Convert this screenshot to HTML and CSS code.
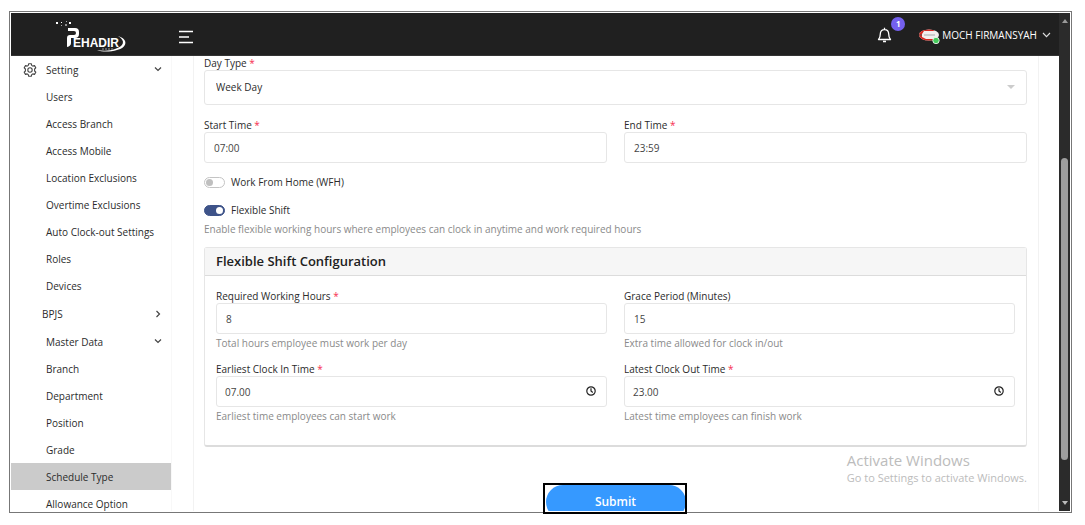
FILE: index.html
```html
<!DOCTYPE html>
<html lang="en">
<head>
<meta charset="utf-8">
<title>Pehadir - Schedule Type</title>
<link rel="stylesheet" href="styles.css">
</head>
<body>
<div class="frame">
  <div class="app">
    <div class="page">
      <header class="topbar">
        <a class="brand" href="#" aria-label="Pehadir">
          <svg width="74" height="38" viewBox="0 0 74 38">
            <g fill="#fff">
              <rect x="1" y="7" width="2" height="2"/><rect x="6" y="7" width="1" height="1"/><rect x="11" y="6" width="1" height="1" opacity=".6"/><rect x="14" y="7" width="2" height="2"/><rect x="10" y="9" width="2" height="2" opacity=".5"/><rect x="6" y="10" width="1" height="1" opacity=".6"/>
              <path d="M13 13h7q4 0 4 4v2q0 4-4 4h-4v5q0 3-4 4v-9q0-3 3-3h4q2 0 2-2t-2-2h-6z"/>
            </g>
            <text class="logo-text" x="18" y="32">EHADIR</text>
            <path d="M63 21c11 3 9 12-1 14c-7 2-15 2-20 0c6 1 13 1 18-1c9-3 11-8 3-13z" fill="#fff"/>
            <path d="M47 34h11" stroke="#999" stroke-width="1" stroke-dasharray="2 1"/>
          </svg>
        </a>
        <button class="icon-btn menu-btn" aria-label="Toggle menu">
          <svg width="16" height="14" viewBox="0 0 16 14" stroke="#fff" stroke-width="1.5"><path d="M1 1.500h14M1 7h10M1 12.500h14"/></svg>
        </button>
        <div class="topbar-right">
          <button class="icon-btn bell" aria-label="Notifications">
            <svg width="15" height="16" viewBox="0 0 15 16" fill="none" stroke="#fff" stroke-width="1.3" stroke-linejoin="round"><path d="M1.500 12.500c1.600-1.600 1.800-2.800 1.800-5.400C3.300 4.300 5 2.600 7.500 2.600s4.200 1.700 4.200 4.500c0 2.600.2 3.800 1.800 5.400zM7.500 2.500V.8M6 14.500h3"/></svg>
            <span class="badge">1</span>
          </button>
          <button class="user">
            <svg width="22" height="18" viewBox="0 0 22 18"><defs><clipPath id="av"><ellipse cx="11" cy="9" rx="10" ry="5.500"/></clipPath></defs><g clip-path="url(#av)"><rect width="22" height="16" fill="#f3eeee"/><path d="M0 0h16v5H6l-2 3v3l4 2h8v4H0z" fill="#d8261f"/><path d="M6 9h11" stroke="#aaa"/><path d="M1 9h3" stroke="#555"/></g><circle cx="18" cy="14.500" r="3.200" fill="#46cb5c" stroke="#fff" stroke-width=".8"/></svg>
            <span>MOCH FIRMANSYAH</span>
            <svg width="9" height="6" viewBox="0 0 9 6" fill="none" stroke="#ddd" stroke-width="1.100"><path d="M1 1l3.500 3.700L8 1"/></svg>
          </button>
        </div>
      </header>
      <div class="body">
        <nav class="sidebar">
          <a class="item setting" href="#">
            <svg class="gear" width="14" height="14" viewBox="0 0 14 14" fill="none" stroke="#444" stroke-width="1.100" stroke-linejoin="round"><path d="M5.700.7h2.600l.4 1.700 1.100.7 1.700-.5 1.300 2.200-1.200 1.200v2l1.200 1.200-1.300 2.200-1.700-.5-1.100.7-.4 1.700H5.700l-.4-1.700-1.100-.7-1.700.5L1.200 9.200 2.400 8V6L1.200 4.800l1.300-2.200 1.700.5 1.100-.7z"/><circle cx="7" cy="7" r="2.200"/></svg>
            <span>Setting</span>
            <svg class="chev" width="8" height="8" viewBox="0 0 8 8"><path d="M1 1.500l3 3 3-3"/></svg>
          </a>
          <a class="item" href="#">Users</a>
          <a class="item" href="#">Access Branch</a>
          <a class="item" href="#">Access Mobile</a>
          <a class="item" href="#">Location Exclusions</a>
          <a class="item" href="#">Overtime Exclusions</a>
          <a class="item" href="#">Auto Clock-out Settings</a>
          <a class="item" href="#">Roles</a>
          <a class="item" href="#">Devices</a>
          <a class="item group" href="#"><span>BPJS</span><svg class="chev" width="8" height="8" viewBox="0 0 8 8"><path d="M2.500 1l3 3-3 3"/></svg></a>
          <a class="item" href="#"><span>Master Data</span><svg class="chev" width="8" height="8" viewBox="0 0 8 8"><path d="M1 1.500l3 3 3-3"/></svg></a>
          <a class="item" href="#">Branch</a>
          <a class="item" href="#">Department</a>
          <a class="item" href="#">Position</a>
          <a class="item" href="#">Grade</a>
          <a class="item active" href="#">Schedule Type</a>
          <a class="item" href="#">Allowance Option</a>
        </nav>
        <main class="main">
          <form class="panel">
            <div class="field">
              <label for="day">Day Type <i>*</i></label>
              <div class="control">
                <select id="day"><option>Week Day</option></select>
                <svg class="caret" width="8" height="4" viewBox="0 0 8 4"><path d="M0 0h8L4 4z" fill="#ccc"/></svg>
              </div>
            </div>
            <div class="row times">
              <div class="field"><label for="start">Start Time <i>*</i></label><input id="start" type="text" value="07:00"></div>
              <div class="field"><label for="end">End Time <i>*</i></label><input id="end" type="text" value="23:59"></div>
            </div>
            <div class="switch"><input type="checkbox" id="wfh"><label for="wfh">Work From Home (WFH)</label></div>
            <div class="switch"><input type="checkbox" id="flex" checked><label for="flex">Flexible Shift</label></div>
            <p class="hint">Enable flexible working hours where employees can clock in anytime and work required hours</p>
            <section class="config">
              <h2>Flexible Shift Configuration</h2>
              <div class="config-body">
                <div class="field"><label for="hours">Required Working Hours <i>*</i></label><input id="hours" type="text" value="8"><p class="hint">Total hours employee must work per day</p></div>
                <div class="field"><label for="grace">Grace Period (Minutes)</label><input id="grace" type="text" value="15"><p class="hint">Extra time allowed for clock in/out</p></div>
                <div class="field"><label for="in">Earliest Clock In Time <i>*</i></label>
                  <div class="control"><input class="time" id="in" type="text" value="07.00"><svg class="clock" width="10" height="10" viewBox="0 0 10 10"><circle cx="5" cy="5" r="4.200"/><path d="M5 2.300V5l1.800 1.500"/></svg></div>
                  <p class="hint">Earliest time employees can start work</p></div>
                <div class="field"><label for="out">Latest Clock Out Time <i>*</i></label>
                  <div class="control"><input class="time" id="out" type="text" value="23.00"><svg class="clock" width="10" height="10" viewBox="0 0 10 10"><circle cx="5" cy="5" r="4.200"/><path d="M5 2.300V5l1.800 1.500"/></svg></div>
                  <p class="hint">Latest time employees can finish work</p></div>
              </div>
            </section>
            <button class="submit" type="submit">Submit</button>
          </form>
        </main>
      </div>
    </div>
    <div class="scrollbar">
      <svg width="6" height="4" viewBox="0 0 6 4"><path d="M0 4l3-4 3 4z" fill="#999"/></svg>
      <div class="track"><div class="thumb"></div></div>
      <svg width="6" height="4" viewBox="0 0 6 4"><path d="M0 0l3 4 3-4z" fill="#bbb"/></svg>
    </div>
  </div>
  <div class="watermark"><strong>Activate Windows</strong><span>Go to Settings to activate Windows.</span></div>
  <div class="highlight"></div>
</div>
</body>
</html>
```

FILE: styles.css
```css
* { box-sizing: border-box; }
body {
  margin: 0;
  padding: 11px 13px 12px 9px;
  height: 100vh;
  background: #fff;
  color: #2b2b2b;
  font: 10px/14px "Open Sans", "Noto Sans", sans-serif;
}
button, input, select { font: inherit; color: inherit; margin: 0; }
a { color: inherit; text-decoration: none; }
.frame { position: relative; height: 100%; border: 1px solid #777; padding: 1px; }
.app { display: flex; height: 100%; overflow: hidden; }
.page { flex: 1; min-width: 0; display: flex; flex-direction: column; }

.topbar { flex: none; display: flex; align-items: center; height: 43px; background: #202020; border-bottom: 1px solid #333; color: #fff; }
.brand { margin-left: 44px; display: flex; }
.logo-text { font: bold 12px "Liberation Sans", sans-serif; fill: #fff; }
.icon-btn { background: none; border: 0; padding: 0; display: flex; }
.menu-btn { margin-left: 49px; margin-top: 5px; }
.topbar-right { display: flex; align-items: center; gap: 26px; margin-left: auto; margin-right: 8px; padding-top: 2px; }
.bell { position: relative; }
.badge {
  position: absolute; left: 14px; top: -10px; width: 14px; height: 14px;
  border-radius: 50%; background: #7460ee; color: #fff;
  font-size: 8px; font-weight: 700; line-height: 14px; text-align: center;
}
.user { display: flex; align-items: center; gap: 2px; background: none; border: 0; padding: 0; color: #fff; white-space: nowrap; }
.user svg:last-child { margin-left: 3px; }

.body { flex: 1; min-height: 0; display: flex; overflow: hidden; }
.sidebar { flex: none; width: 161px; border-right: 1px solid #f8f8f8; }
.item { display: flex; align-items: center; height: 27px; padding: 0 9px 0 35px; white-space: nowrap; }
.item.setting { padding-left: 12px; gap: 9px; }
.item.group { height: 29px; padding-left: 31px; }
.item.active { background: #cbcbcb; }
.chev { margin-left: auto; fill: none; stroke: #444; stroke-width: 1.2; }

.main { flex: 1; min-width: 0; padding: 0 20px 0 21px; }
.panel { border: solid #f2f2f2; border-width: 0 1px; padding: 0 11px 20px 10px; }
label { display: block; white-space: nowrap; }
label i { color: #f62d51; font-style: normal; }
.control { position: relative; }
.field input, select {
  display: block; width: 100%; height: 31px; padding: 0 9px;
  border: 1px solid #e6e6e6; border-radius: 3px; background: #fff;
}
.field input { color: #444; }
.field .time { padding-left: 8px; }
select { appearance: none; height: 35px; padding: 0 11px 2px; }
.caret { position: absolute; right: 12px; top: 15px; }
.clock { position: absolute; right: 11px; top: 10px; fill: none; stroke: #222; stroke-width: 1.2; }
.row { display: grid; grid-template-columns: 1fr 1fr; gap: 17px; }
.times { margin: 13px 0 11px; }
.switch { display: flex; align-items: center; gap: 6px; height: 16px; margin-bottom: 12px; }
.switch input {
  appearance: none; width: 21px; height: 11px; padding: 1px;
  border: 1px solid #c4c4c4; border-radius: 6px; display: flex; align-items: center;
}
.switch input::before { content: ""; width: 7px; height: 7px; border-radius: 50%; background: #bfbfbf; }
.switch input:checked { background: #3e5389; border-color: #3e5389; justify-content: flex-end; }
.switch input:checked::before { background: #fff; }
.hint { margin: 2px 0 0; color: #8a8a8a; }
.panel > .hint { margin: -8px 0 11px; }
.config { border: 1px solid #e6e6e6; border-bottom: 2px solid #dcdcdc; border-radius: 3px; }
.config h2 { margin: 0; padding: 4px 11px; background: #f6f6f6; border-bottom: 1px solid #dcdcdc; font-size: 13px; font-weight: 600; line-height: 19px; color: #212121; }
.config-body { display: grid; grid-template-columns: 1fr 1fr; gap: 12px 17px; padding: 13px 11px 22px; }
.submit { display: block; width: 140px; height: 34px; margin: 38px auto 0; border: 0; border-radius: 17px; background: #3699ff; color: #fff; font-size: 12px; font-weight: 600; }

.scrollbar { flex: none; width: 11px; background: #2b2b2b; display: flex; flex-direction: column; align-items: center; padding: 6px 0; }
.track { flex: 1; padding: 135px 0 41px; display: flex; }
.thumb { width: 7px; border-radius: 4px; background: #9e9e9e; }

.watermark { position: absolute; right: 44px; bottom: 26px; display: flex; flex-direction: column; color: #bcbcbc; font-size: 11px; line-height: 17px; }
.watermark strong { font-size: 15px; font-weight: 400; }
.highlight { position: absolute; left: calc(50% + 2px); bottom: -2px; width: 144px; height: 31px; border: 2px solid #000; }
```
